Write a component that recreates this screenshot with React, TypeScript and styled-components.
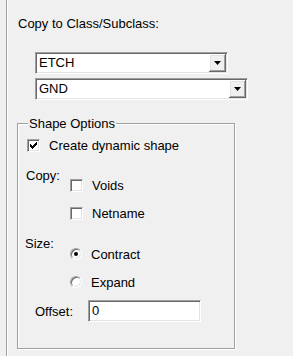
import styled, { createGlobalStyle } from 'styled-components';

const GlobalStyle = createGlobalStyle`
  html, body {
    margin: 0;
    padding: 0;
    background: #f0f0f0;
  }
  body {
    font-family: 'Liberation Sans', Arial, sans-serif;
    font-size: 13px;
    color: #000;
  }
`;

const Panel = styled.div`
  box-sizing: border-box;
  width: 287px;
  height: 356px;
  margin-left: 6px;
  border-left: 1px solid #a0a0a0;
  box-shadow: inset 1px 0 0 #fff;
  padding: 16px 0 0 11px;
`;

const Title = styled.div`
  line-height: 15px;
`;

const ComboStack = styled.div`
  display: flex;
  flex-direction: column;
  align-items: flex-start;
  gap: 4px;
  margin: 21px 0 0 17px;
`;

const Sunken = styled.div`
  box-sizing: border-box;
  height: 22px;
  padding: 1px;
  background: #fff;
  border: 1px solid;
  border-color: #a0a0a0 #fff #fff #a0a0a0;
  box-shadow: inset 1px 1px 0 #696969, inset -1px -1px 0 #e3e3e3;
`;

const Combo = styled(Sunken)<{ $width: number }>`
  display: flex;
  width: ${p => p.$width}px;
`;

const ComboValue = styled.span`
  flex: 1;
  padding-left: 2px;
  line-height: 18px;
`;

const DropButton = styled.span`
  display: flex;
  align-items: center;
  justify-content: center;
  width: 17px;
  height: 18px;
  background: #f0f0f0;
  box-shadow: inset -1px -1px 0 #696969, inset 1px 1px 0 #fff,
    inset -2px -2px 0 #a0a0a0, inset 2px 2px 0 #e3e3e3;
`;

const GroupBox = styled.div`
  position: relative;
  box-sizing: border-box;
  width: 218px;
  height: 226px;
  margin: 23px 0 0 -1px;
  padding: 15px 0 0 8px;
  border: 1px solid #a0a0a0;
  box-shadow: 1px 1px 0 #fff, inset 1px 1px 0 #fff;
`;

const Legend = styled.span`
  position: absolute;
  top: -7px;
  left: 10px;
  padding: 0 1px;
  background: #f0f0f0;
  line-height: 14px;
`;

const OptionRow = styled.div<{ $height: number; $indent?: number }>`
  display: flex;
  align-items: center;
  gap: 9px;
  height: ${p => p.$height}px;
  margin-left: ${p => p.$indent ?? 0}px;
  line-height: 15px;
  white-space: nowrap;
`;

const CheckBox = styled.span`
  box-sizing: border-box;
  display: flex;
  align-items: center;
  justify-content: center;
  flex: none;
  width: 13px;
  height: 13px;
  background: #fff;
  border: 1px solid;
  border-color: #a0a0a0 #fff #fff #a0a0a0;
  box-shadow: inset 1px 1px 0 #696969, inset -1px -1px 0 #e3e3e3;
`;

const Radio = styled.span`
  box-sizing: border-box;
  display: flex;
  align-items: center;
  justify-content: center;
  flex: none;
  width: 12px;
  height: 12px;
  border-radius: 50%;
  background: #fff;
  border: 1px solid;
  border-color: #a0a0a0 #fff #fff #a0a0a0;
  box-shadow: inset 1px 1px 0 #696969, inset -1px -1px 0 #e3e3e3;
`;

const RadioDot = styled.span`
  width: 4px;
  height: 4px;
  border-radius: 50%;
  background: #000;
`;

const Section = styled.div<{ $top: number; $left: number; $label: number }>`
  display: grid;
  grid-template-columns: ${p => p.$label}px auto;
  margin: ${p => p.$top}px 0 0 ${p => p.$left}px;
`;

const SectionLabel = styled.div`
  line-height: 15px;
`;

const Options = styled.div<{ $pad: number; $gap: number }>`
  display: flex;
  flex-direction: column;
  gap: ${p => p.$gap}px;
  padding-top: ${p => p.$pad}px;
`;

const FieldRow = styled.div`
  display: flex;
  align-items: center;
  margin: 12px 0 0 9px;
`;

const FieldLabel = styled.span`
  width: 53px;
`;

const TextField = styled(Sunken)`
  width: 113px;
  padding-left: 3px;
  line-height: 18px;
`;

const Arrow = () => (
  <svg width="7" height="4" viewBox="0 0 7 4">
    <polygon points="0,0 7,0 3.5,4" fill="#000" />
  </svg>
);

const Check = () => (
  <svg width="7" height="7" viewBox="0 0 7 7" shapeRendering="crispEdges">
    <path
      d="M6 0h1v1h-1zM5 1h2v1h-2zM0 2h1v1h-1zM4 2h3v1h-3zM0 3h2v1h-2zM3 3h3v1h-3zM0 4h5v1h-5zM1 5h3v1h-3zM2 6h1v1h-1z"
      fill="#000"
    />
  </svg>
);

const ComboBox = ({ value, width }: { value: string; width: number }) => (
  <Combo $width={width}>
    <ComboValue>{value}</ComboValue>
    <DropButton>
      <Arrow />
    </DropButton>
  </Combo>
);

const App = () => {
  return (
    <>
      <GlobalStyle />
      <Panel>
        <Title>Copy to Class/Subclass:</Title>
        <ComboStack>
          <ComboBox value="ETCH" width={193} />
          <ComboBox value="GND" width={213} />
        </ComboStack>
        <GroupBox>
          <Legend>Shape Options</Legend>
          <OptionRow $height={13} $indent={1}>
            <CheckBox>
              <Check />
            </CheckBox>
            Create dynamic shape
          </OptionRow>

          <Section $top={16} $left={0} $label={44}>
            <SectionLabel>Copy:</SectionLabel>
            <Options $pad={11} $gap={15}>
              <OptionRow $height={13}>
                <CheckBox />
                Voids
              </OptionRow>
              <OptionRow $height={13}>
                <CheckBox />
                Netname
              </OptionRow>
            </Options>
          </Section>

          <Section $top={16} $left={-1} $label={45}>
            <SectionLabel>Size:</SectionLabel>
            <Options $pad={12} $gap={16}>
              <OptionRow $height={12}>
                <Radio>
                  <RadioDot />
                </Radio>
                Contract
              </OptionRow>
              <OptionRow $height={12}>
                <Radio />
                Expand
              </OptionRow>
            </Options>
          </Section>

          <FieldRow>
            <FieldLabel>Offset:</FieldLabel>
            <TextField>0</TextField>
          </FieldRow>
        </GroupBox>
      </Panel>
    </>
  );
};

export default App;
